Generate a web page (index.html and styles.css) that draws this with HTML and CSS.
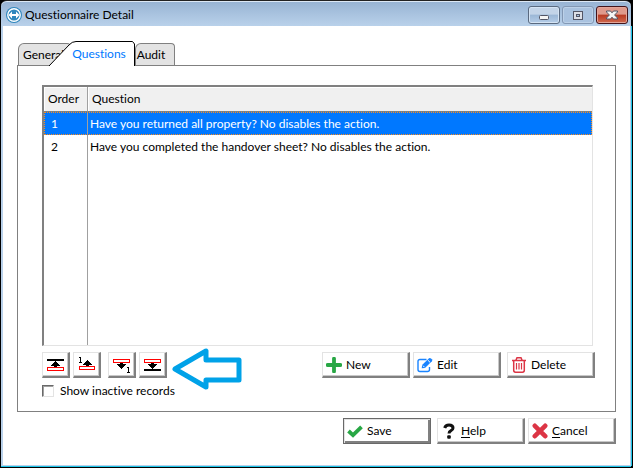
FILE: index.html
```html
<!DOCTYPE html>
<html lang="en">
<head>
<meta charset="utf-8">
<title>Questionnaire Detail</title>
<link rel="stylesheet" href="styles.css">
</head>
<body>
<div class="window">
  <header class="titlebar">
    <svg class="logo" width="18" height="18" viewBox="0 0 18 18" aria-hidden="true">
      <circle cx="9" cy="9" r="8" fill="#2f87bd"/>
      <circle cx="9" cy="9" r="6.2" fill="#2f87bd" stroke="#fff" stroke-width="1.4"/>
      <path d="M3.500 9L7 5.500V8H11V5.500L14.500 9L11 12.500V10H7V12.500Z" fill="#fff"/>
    </svg>
    <h1 class="title">Questionnaire Detail</h1>
    <div class="controls">
      <button class="control" aria-label="Minimize">
        <svg width="12" height="14" viewBox="0 0 12 14"><rect x="1.5" y="7.5" width="9" height="4" rx="1" fill="#f5f5f5" stroke="#535666"/></svg>
      </button>
      <button class="control control-dim" aria-label="Maximize">
        <svg width="12" height="14" viewBox="0 0 12 14"><rect x="1.5" y="3.5" width="9" height="8" fill="#dcdfe6" stroke="#535666"/><rect x="4.5" y="6.5" width="3" height="2" fill="#a9c3e2" stroke="#535666"/></svg>
      </button>
      <button class="control control-close" aria-label="Close">
        <svg width="12" height="14" viewBox="0 0 12 14"><path d="M.5 3H4.500L6 4.800L7.500 3H11.500V4L8.600 7L11.500 10V11H7.500L6 9.200L4.500 11H.5V10L3.400 7L.5 4Z" fill="#f5f5f5" stroke="#535666"/></svg>
      </button>
    </div>
  </header>
  <main class="client">
    <nav class="tabs" role="tablist">
      <button class="tab tab-general" role="tab">General</button>
      <button class="tab tab-active" role="tab" aria-selected="true">
        <svg class="tab-shape" width="87" height="25" viewBox="0 0 87 25" aria-hidden="true"><path d="M0 25L20 4Q23 .5 27 .5H83.500L85.500 3V25" fill="#fff" stroke="#000"/></svg>
        <span class="tab-label">Questions</span>
      </button>
      <button class="tab tab-audit" role="tab">Audit</button>
    </nav>
    <section class="panel" role="tabpanel">
      <div class="grid-box">
        <table class="grid">
          <thead><tr><th class="order">Order</th><th>Question</th></tr></thead>
          <tbody>
            <tr class="selected"><td class="order">1</td><td>Have you returned all property? No disables the action.</td></tr>
            <tr><td class="order">2</td><td>Have you completed the handover sheet? No disables the action.</td></tr>
            <tr class="filler"><td class="order"></td><td></td></tr>
          </tbody>
        </table>
      </div>
      <div class="toolbar">
        <div class="moves">
          <button class="push move" aria-label="Move to top">
            <svg width="20" height="18" viewBox="0 0 20 18" shape-rendering="crispEdges"><path d="M1 3H18V5H1Z"/><path d="M9 5H10V6H11V7H12V8H13V9H14V10H11V12H8V10H5V9H6V8H7V7H8V6H9Z"/><rect x="1.500" y="11.500" width="16" height="3" fill="none" stroke="#f00"/></svg>
          </button>
          <button class="push move" aria-label="Move up one">
            <svg width="20" height="18" viewBox="0 0 20 18" shape-rendering="crispEdges"><path d="M2 1H4V6H3V2H2ZM2 6H5V7H2Z"/><path d="M10 4H11V5H12V6H13V7H14V8H15V9H12V10H9V9H6V8H7V7H8V6H9V5H10Z"/><rect x="2.500" y="10.500" width="15" height="3" fill="none" stroke="#f00"/></svg>
          </button>
          <button class="push move move-down" aria-label="Move down one">
            <svg width="20" height="18" viewBox="0 0 20 18" shape-rendering="crispEdges"><path d="M8 7H11V8H14V9H13V10H12V11H11V12H10V13H9V12H8V11H7V10H6V9H5V8H8Z"/><rect x="1.500" y="3.500" width="16" height="3" fill="none" stroke="#f00"/><path d="M15 11H17V16H16V12H15ZM15 16H18V17H15Z"/></svg>
          </button>
          <button class="push move" aria-label="Move to bottom">
            <svg width="20" height="18" viewBox="0 0 20 18" shape-rendering="crispEdges"><path d="M8 7H11V8H14V9H13V10H12V11H11V12H10V13H9V12H8V11H7V10H6V9H5V8H8Z"/><path d="M1 13H18V15H1Z"/><rect x="1.500" y="3.500" width="16" height="3" fill="none" stroke="#f00"/></svg>
          </button>
          <svg class="pointer" width="72" height="44" viewBox="0 0 72 44" aria-hidden="true"><path d="M5 22L36 4V13H69V33H36V40Z" fill="#fff" stroke="#00a2e8" stroke-width="5" stroke-linejoin="round"/></svg>
        </div>
        <div class="actions">
          <button class="push"><svg width="16" height="16" viewBox="0 0 16 16"><path d="M8 1.600V14.400M1.600 8H14.400" stroke="#28a745" stroke-width="3.800" stroke-linecap="round"/></svg>New</button>
          <button class="push"><svg width="16" height="16" viewBox="0 0 16 16"><path d="M9.500 2.500H3Q1 2.500 1 4.500V12.500Q1 14.500 3 14.500H10.500Q12.500 14.500 12.500 12.500V10" fill="none" stroke="#1a84ff" stroke-width="1.400"/><path d="M4.700 11.300L5.100 8L12 1.200Q13 .5 14 1.400L14.900 2.300Q15.700 3.200 14.900 4.200L8 11L4.700 11.300Z" fill="#1a84ff"/><path d="M6 8.700L7.500 10.200M10.700 3L13 5.300" stroke="#fff"/></svg>Edit</button>
          <button class="push push-delete"><svg width="16" height="16" viewBox="0 0 16 16" fill="none" stroke="#dc3545"><path d="M1 3.500H15M5 3L6 .8H10L11 3" stroke-width="1.500"/><path d="M2.700 4V13.300Q2.700 15.200 4.500 15.200H11.500Q13.300 15.200 13.300 13.300V4" stroke-width="1.500"/><path d="M5.500 6V12.500M8 6V12.500M10.500 6V12.500" stroke-width="1.200"/></svg>Delete</button>
        </div>
      </div>
      <label class="check"><input type="checkbox">Show inactive records</label>
    </section>
    <footer class="footer">
      <button class="push push-default"><svg width="16" height="16" viewBox="0 0 16 16"><path d="M1.500 8L6 12.200L14.500 3.800" fill="none" stroke="#28a745" stroke-width="3.800"/></svg>Save</button>
      <button class="push push-help"><svg width="16" height="16" viewBox="0 0 16 16"><path d="M3.700 5Q4.500 2 8 2Q12 2 12 5Q12 6.700 10 7.600Q8 8.500 8 10.500" fill="none" stroke="#111" stroke-width="3"/><rect x="6.200" y="12.200" width="3.600" height="3.600" rx="1" fill="#111"/></svg><span><u>H</u>elp</span></button>
      <button class="push"><svg width="16" height="16" viewBox="0 0 16 16"><path d="M2.800 2.800L13.200 13.200M13.200 2.800L2.800 13.200" stroke="#dc3545" stroke-width="4.600" stroke-linecap="round"/></svg><span><u>C</u>ancel</span></button>
    </footer>
  </main>
</div>
</body>
</html>
```
FILE: styles.css
```css
* { box-sizing: border-box; }

body {
  margin: 0;
  background: #000;
  color: #000;
  font: 12px/16px Lato, "Open Sans", sans-serif;
  font-variant-ligatures: none;
}

button {
  font: inherit;
  font-variant-ligatures: none;
  color: inherit;
}

svg {
  flex: none;
}

.window {
  display: flex;
  flex-direction: column;
  height: 100vh;
  padding: 0 2px 2px 1px;
}

.titlebar {
  display: flex;
  align-items: center;
  height: 26px;
  flex: none;
  padding: 2px 3px 0 4px;
  border-top: 1px solid #222;
  border-radius: 6px 6px 0 0;
  background: linear-gradient(#97b3d3, #b9d1ea);
  box-shadow: inset 0 1px #dce8f5;
}

.title {
  margin: 0 auto 0 2px;
  font-size: 12px;
  font-weight: 400;
}

.controls {
  display: flex;
  gap: 2px;
}

.control {
  display: flex;
  align-items: center;
  justify-content: center;
  width: 32px;
  height: 18px;
  padding: 0;
  border: 1px solid #5a6a80;
  border-radius: 3px;
  background: linear-gradient(#c3d4e8 45%, #9bb7d6 50%, #b5cde8);
  box-shadow: inset 0 0 0 1px #d5e4f4;
}

.control-dim {
  border-color: #8398b4;
  background: #a9c2df;
  box-shadow: inset 0 0 0 1px #bcd1e8;
}

.control-close {
  border-color: #43141b;
  background: linear-gradient(#df9a8c 45%, #b83a22 50%, #cf6a50);
  box-shadow: inset 0 0 0 1px #e3a598;
}

.client {
  display: flex;
  flex: 1;
  flex-direction: column;
  padding: 15px 14px 21px;
  border: solid #b9d1ea;
  border-width: 0 1px 1px 2px;
  background: #fff;
  box-shadow: 0 1px #1bc5e8, 1px 0 #1bc5e8;
}

.tabs {
  display: flex;
  align-items: flex-end;
  height: 24px;
  padding-left: 1px;
}

.tab {
  height: 22px;
  padding: 0;
  border: 1px solid #808080;
  border-bottom: 0;
  border-radius: 6px 4px 0 0;
  background: #e3e3e3;
}

.tab-general {
  width: 53px;
  padding-left: 4px;
  text-align: left;
}

.tab-active {
  position: relative;
  z-index: 1;
  width: 86px;
  height: 25px;
  margin: 0 0 -1px -22px;
  border: 0;
  background: none;
  color: #0078ff;
}

.tab-shape {
  position: absolute;
  inset: 0;
}

.tab-label {
  position: relative;
  padding-left: 14px;
}

.tab-audit {
  width: 40px;
  padding-right: 8px;
}

.panel {
  display: flex;
  flex: 1;
  flex-direction: column;
  padding: 19px 20px 12px 24px;
  border: 1px solid #808080;
}

.grid-box {
  display: flex;
  flex: 1;
  margin-right: 2px;
  border: solid #808080;
  border-width: 2px 1px 1px 2px;
  border-right-color: #e3e3e3;
  border-bottom-color: #e3e3e3;
}

.grid {
  width: 100%;
  border-collapse: separate;
  border-spacing: 0;
}

.grid th,
.grid td {
  height: 23px;
  padding: 0 2px;
  text-align: left;
  font-weight: 400;
}

.grid th {
  height: 25px;
  padding-left: 4px;
  border-bottom: 1px solid #808080;
  background: #f0f0f0;
  box-shadow: inset 1px 1px #fff;
}

.grid .order {
  width: 44px;
  border-right: 1px solid #a0a0a0;
}

.grid td.order {
  padding-left: 7px;
}

.grid .filler td {
  height: auto;
}

.selected {
  background: #0078ff;
  color: #fff;
  outline: 1px dotted #ff8c1a;
  outline-offset: -1px;
}

.toolbar,
.moves,
.actions,
.footer {
  display: flex;
}

.toolbar {
  justify-content: space-between;
  margin-top: 6px;
}

.moves,
.actions,
.footer {
  gap: 3px;
}

.push {
  display: flex;
  align-items: center;
  gap: 4px;
  width: 88px;
  height: 26px;
  padding: 0 3px;
  border: solid;
  border-width: 1px 2px 2px 1px;
  border-color: #e3e3e3 #808080 #808080 #e3e3e3;
  background: #fff;
  box-shadow: inset -1px -1px #c8c8c8;
}

.move {
  justify-content: center;
  width: 28px;
  padding: 0;
}

.move-down {
  margin-left: 4px;
}

.pointer {
  margin: -5px 0 -13px;
}

.push-delete {
  margin-left: 3px;
}

.check {
  display: flex;
  align-items: center;
  gap: 6px;
  margin-top: 5px;
}

.check input {
  appearance: none;
  width: 12px;
  height: 12px;
  margin: 0;
  border: 1px solid;
  border-color: #696969 #e3e3e3 #e3e3e3 #696969;
  background: #fff;
  box-shadow: inset 1px 1px #a0a0a0;
}

.footer {
  justify-content: flex-end;
  margin-top: 6px;
}

.push-default {
  border: 1px solid #696969;
  box-shadow: inset 1px 1px #e3e3e3, inset -2px -2px #808080;
}

.push-help {
  margin-left: 3px;
}

.push u {
  text-underline-offset: 2px;
}
```
